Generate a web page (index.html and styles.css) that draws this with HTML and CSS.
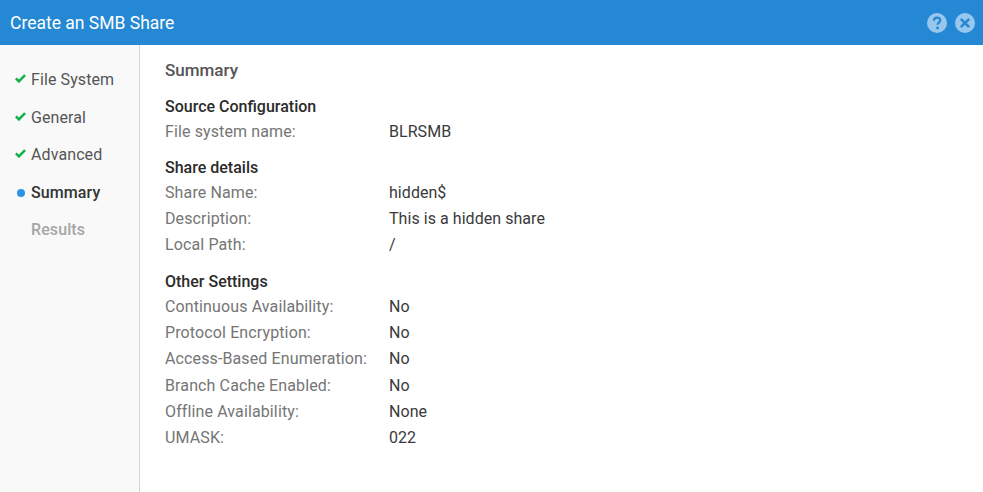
FILE: index.html
```html
<!DOCTYPE html>
<html lang="en">
<head>
    <meta charset="UTF-8">
    <title>Create an SMB Share</title>
    <link rel="stylesheet" href="styles.css">
</head>
<body>
<div class="dialog">
    <header class="dialog-header">
        <h1 class="dialog-title">Create an SMB Share</h1>
        <div class="header-icons">
            <svg class="header-icon" viewBox="0 0 20 20">
                <circle cx="10" cy="10" r="10" fill="#97c7ec"></circle>
                <path d="M6.900 7.700c.1-2 1.400-3.100 3.200-3.100 1.800 0 3.100 1.100 3.100 2.700 0 2.300-2.700 2.300-2.700 4.500" fill="none" stroke="#2488d4" stroke-width="2.200"></path>
                <circle cx="10.500" cy="15" r="1.400" fill="#2488d4"></circle>
            </svg>
            <svg class="header-icon" viewBox="0 0 20 20">
                <circle cx="10" cy="10" r="10" fill="#97c7ec"></circle>
                <path d="M5.800 5.800l8.400 8.400M14.200 5.800l-8.400 8.400" fill="none" stroke="#2488d4" stroke-width="2.600"></path>
            </svg>
        </div>
    </header>

    <div class="dialog-body">
        <!-- Wizard steps -->
        <nav class="steps">
            <div class="step">
                <svg class="step-check" viewBox="0 0 12 10"><path d="M1 4.800l3.200 3.200 6.800-6.800" fill="none" stroke="#12b04a" stroke-width="2.800"></path></svg>
                File System
            </div>
            <div class="step">
                <svg class="step-check" viewBox="0 0 12 10"><path d="M1 4.800l3.200 3.200 6.800-6.800" fill="none" stroke="#12b04a" stroke-width="2.800"></path></svg>
                General
            </div>
            <div class="step">
                <svg class="step-check" viewBox="0 0 12 10"><path d="M1 4.800l3.200 3.200 6.800-6.800" fill="none" stroke="#12b04a" stroke-width="2.800"></path></svg>
                Advanced
            </div>
            <div class="step step-current">
                <span class="step-dot"></span>
                Summary
            </div>
            <div class="step step-todo">Results</div>
        </nav>

        <main class="summary">
            <h2 class="summary-title">Summary</h2>

            <h3 class="group-title">Source Configuration</h3>
            <div class="row"><span class="label">File system name:</span><span class="value">BLRSMB</span></div>

            <h3 class="group-title">Share details</h3>
            <div class="row"><span class="label">Share Name:</span><span class="value">hidden$</span></div>
            <div class="row"><span class="label">Description:</span><span class="value">This is a hidden share</span></div>
            <div class="row"><span class="label">Local Path:</span><span class="value">/</span></div>

            <h3 class="group-title">Other Settings</h3>
            <div class="row"><span class="label">Continuous Availability:</span><span class="value">No</span></div>
            <div class="row"><span class="label">Protocol Encryption:</span><span class="value">No</span></div>
            <div class="row"><span class="label">Access-Based Enumeration:</span><span class="value">No</span></div>
            <div class="row"><span class="label">Branch Cache Enabled:</span><span class="value">No</span></div>
            <div class="row"><span class="label">Offline Availability:</span><span class="value">None</span></div>
            <div class="row"><span class="label">UMASK:</span><span class="value">022</span></div>
        </main>
    </div>
</div>
</body>
</html>
```

FILE: styles.css
```css
* {
    box-sizing: border-box;
    margin: 0;
    padding: 0;
    font-family: Roboto, "Liberation Sans", sans-serif;
}

body {
    background-color: white;
    overflow: hidden;
}

.dialog {
    display: flex;
    flex-direction: column;
    height: 492px;
}

.dialog-header {
    display: flex;
    align-items: center;
    justify-content: space-between;
    height: 45px;
    flex-shrink: 0;
    padding: 0 8px 0 10px;
    background-color: #2488d4;
}

.dialog-title {
    font-size: 17.500px;
    font-weight: 400;
    color: white;
}

.header-icons {
    display: flex;
    gap: 8px;
}

.header-icon {
    width: 20px;
    height: 20px;
}

.dialog-body {
    display: flex;
    flex-grow: 1;
}

.steps {
    width: 140px;
    flex-shrink: 0;
    padding-top: 16px;
    background-color: #f9f9f9;
    border-right: 1px solid #d4d4d4;
}

.step {
    display: flex;
    align-items: center;
    height: 37.500px;
    padding-left: 31px;
    position: relative;
    font-size: 16px;
    letter-spacing: 0.1px;
    color: #555;
}

.step-check {
    position: absolute;
    left: 15px;
    top: 13px;
    width: 11px;
    height: 9.200px;
}

.step-current {
    font-weight: 500;
    color: #333;
}

.step-dot {
    position: absolute;
    left: 17px;
    top: 15px;
    width: 8px;
    height: 8px;
    border-radius: 50%;
    background-color: #2f92e4;
}

.step-todo {
    font-weight: 500;
    color: #a6a6a6;
}

.summary {
    flex-grow: 1;
    padding: 15px 0 0 25px;
}

.summary-title {
    font-size: 17px;
    font-weight: 500;
    line-height: 20px;
    color: #555;
    margin-bottom: 16.600px;
}

.group-title {
    font-size: 16px;
    font-weight: 500;
    line-height: 20px;
    color: #2b2b2b;
    margin-bottom: 1.400px;
}

.row {
    display: flex;
    height: 26.240px;
    align-items: center;
    font-size: 16px;
}

.row + .group-title {
    margin-top: 13.800px;
}

.label {
    width: 224px;
    letter-spacing: 0.12px;
    color: #757575;
}

.value {
    letter-spacing: 0.05px;
    color: #3a3a3a;
}
```
